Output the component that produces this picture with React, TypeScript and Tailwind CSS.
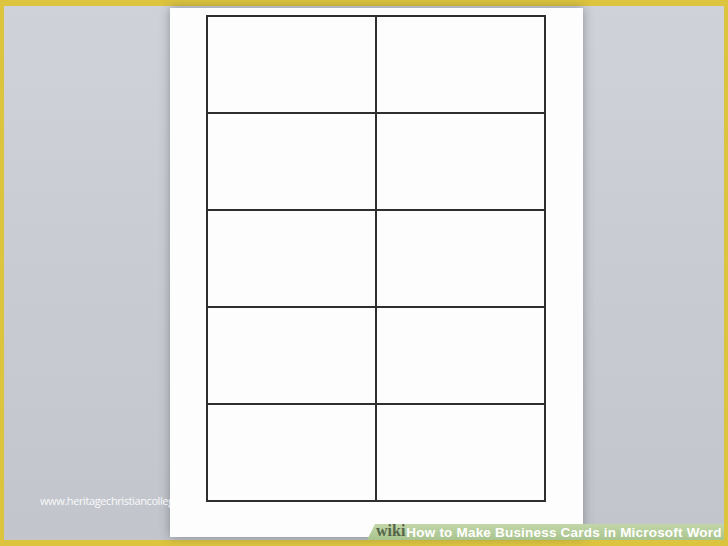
import React from 'react';

const rows = [0, 1, 2, 3, 4];

export default function App() {
  return (
    <div className="w-[728px] h-[546px] bg-[#dcc43e] pt-[6px] px-[4px] pb-[6px] overflow-hidden">
      <div className="relative h-full w-full bg-gradient-to-b from-[#cfd2d9] to-[#c2c5cc] pl-[166px] pt-[2px]">
        <div className="relative h-[529px] w-[413px] bg-[#fdfdfd] shadow-[0_0_10px_rgba(60,62,70,0.45)] pl-[36px] pt-[7px]">
          <div className="grid w-[340px] grid-cols-2 border-l-2 border-t-2 border-[#2e2e2e]">
            {rows.map((r) => (
              <React.Fragment key={r}>
                <div className="h-[97px] border-b-2 border-r-2 border-[#2e2e2e]" />
                <div className="h-[97px] border-b-2 border-r-2 border-[#2e2e2e]" />
              </React.Fragment>
            ))}
          </div>
        </div>

        {/* watermark */}
        <div className="absolute left-[36px] top-[487px] whitespace-nowrap text-[11px] tracking-[-0.4px] text-white/90 font-['Open_Sans',sans-serif]">
          www.heritagechristiancollege.com
        </div>

        {/* wikiHow banner */}
        <div className="absolute left-[363px] bottom-0 h-[16px] w-[357px] bg-gradient-to-b from-[#c2d6a8] to-[#a9c48e] [clip-path:polygon(8px_0,100%_0,100%_100%,0_100%)] flex items-end pb-[1px] pl-[9px] whitespace-nowrap">
          <span className="text-[16px] leading-none font-bold text-[#55654a] font-['Liberation_Serif',serif]">wiki</span>
          <span className="ml-[1px] text-[13.5px] leading-none font-bold text-white font-['Liberation_Sans',sans-serif] tracking-[0.2px]">
            How to Make Business Cards in Microsoft Word
          </span>
        </div>
      </div>
    </div>
  );
}
